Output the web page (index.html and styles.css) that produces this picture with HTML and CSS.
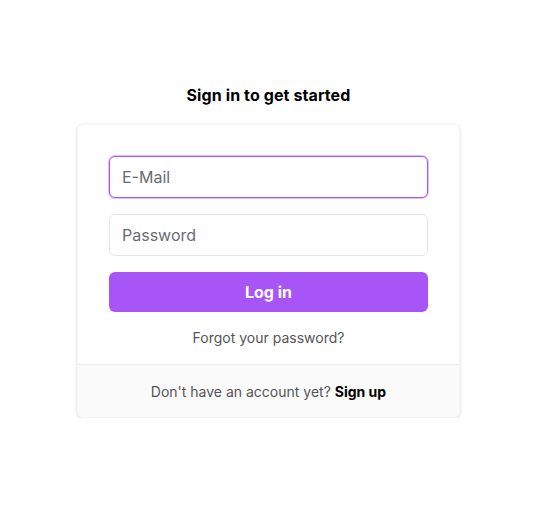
FILE: index.html
```html
<!DOCTYPE html>
<html lang="en">
<head>
<meta charset="utf-8">
<link rel="stylesheet" href="styles.css">
</head>
<body>
<main class="page">
  <h1 class="title">Sign in to get started</h1>
  <div class="card">
    <form class="form">
      <input class="field focused" type="email" placeholder="E-Mail">
      <input class="field" type="password" placeholder="Password">
      <button class="btn" type="button">Log in</button>
      <a class="forgot" href="#">Forgot your password?</a>
    </form>
    <div class="footer">Don't have an account yet? <a href="#" class="signup">Sign up</a></div>
  </div>
</main>
</body>
</html>
```
FILE: styles.css
```css
* { box-sizing: border-box; }
html, body { margin: 0; padding: 0; background: #fff; }
body { font-family: Inter, "Noto Sans", sans-serif; color: #111; }
.page {
  display: flex;
  flex-direction: column;
  align-items: center;
  padding: 85px 12px 0 0;
}
.title {
  margin: 0 0 19px;
  font-size: 16px;
  font-weight: 700;
  line-height: 20px;
  color: #000;
  letter-spacing: 0.1px;
}
.card {
  width: 383px;
  background: #fff;
  border-radius: 6px;
  box-shadow: 0 1px 4px rgba(0,0,0,0.12), 0 1px 2px rgba(0,0,0,0.05);
  border: 1px solid #f5f5f5;
  overflow: hidden;
}
.form {
  display: flex;
  flex-direction: column;
  padding: 31px 31px 17px;
}
.field {
  height: 42px;
  border: 1px solid #e5e5e5;
  border-radius: 6px;
  padding: 0 12px;
  font-family: inherit;
  font-size: 16px;
  color: #111;
  margin-bottom: 16px;
  outline: none;
  background: #fff;
}
.field::placeholder { color: #6b6b73; }
.field.focused { border-color: #a855f7; box-shadow: 0 0 0 1px rgba(168,85,247,0.35); }
.btn {
  height: 40px;
  border: none;
  border-radius: 6px;
  background: #a855f7;
  color: #fff;
  font-family: inherit;
  font-size: 16px;
  font-weight: 700;
}
.forgot {
  margin-top: 17px;
  text-align: center;
  font-size: 14px;
  line-height: 18px;
  color: #555;
  text-decoration: none;
}
.footer {
  border-top: 1px solid #ebebeb;
  background: #fafafa;
  height: 53px;
  display: flex;
  align-items: center;
  justify-content: center;
  font-size: 14px;
  color: #555;
  white-space: pre;
}
.signup { color: #000; font-weight: 700; text-decoration: none; }
```
